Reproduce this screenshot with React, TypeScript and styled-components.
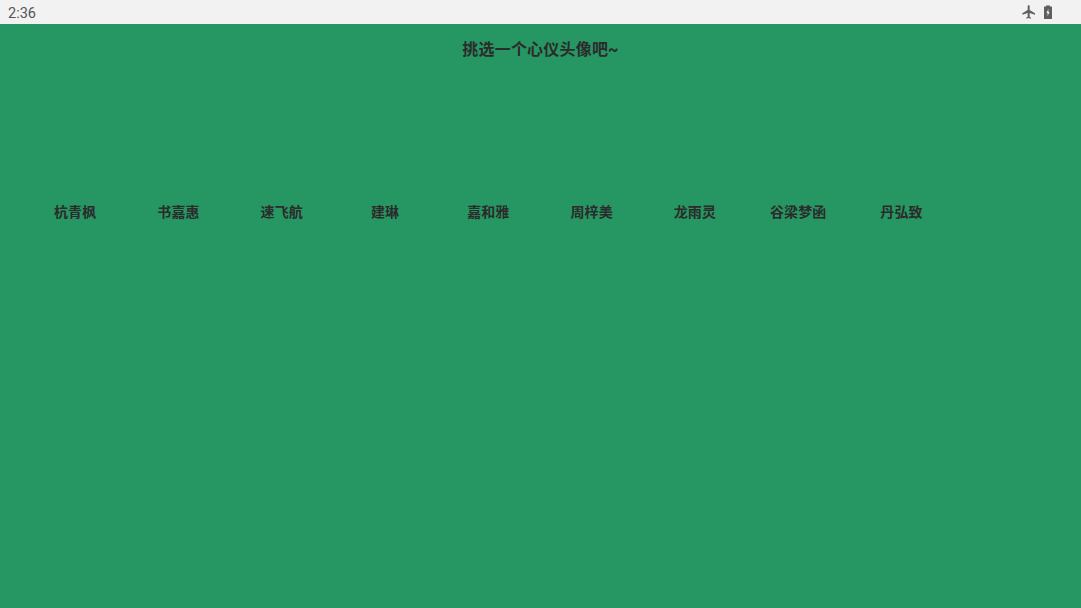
import React from 'react'
import styled, { createGlobalStyle } from 'styled-components'

const NAMES = ['杭青枫', '书嘉惠', '速飞航', '建琳', '嘉和雅', '周梓美', '龙雨灵', '谷梁梦函', '丹弘致']

const GlobalStyle = createGlobalStyle`
  html, body {
    margin: 0;
    padding: 0;
    height: 100%;
    overflow: hidden;
  }
  #root {
    height: 100%;
  }
`

const Page = styled.div`
  width: 1081px;
  height: 608px;
  display: flex;
  flex-direction: column;
  background: #269763;
  font-family: Roboto, "Noto Sans CJK SC", sans-serif;
`

const StatusBar = styled.div`
  height: 24px;
  flex: none;
  display: flex;
  align-items: center;
  justify-content: space-between;
  padding: 0 25px 0 8px;
  background: #f2f2f2;
`

const Clock = styled.span`
  font-size: 14.5px;
  color: #555555;
  position: relative;
  top: 1px;
`

const StatusIcons = styled.div`
  display: flex;
  align-items: center;
  gap: 3px;
`

const Title = styled.h1`
  margin: 0;
  padding-top: 15px;
  height: 22px;
  line-height: 22px;
  font-size: 16px;
  font-weight: 700;
  letter-spacing: 0.2px;
  text-align: center;
  color: #2b2b2b;
`

const NameRow = styled.div`
  display: flex;
  padding: 141px 0 0 23.5px;
`

const NameItem = styled.div`
  width: 103.3px;
  height: 20px;
  line-height: 20px;
  font-size: 14px;
  font-weight: 700;
  letter-spacing: 0.1px;
  text-align: center;
  color: #2b2b2b;
`

function AirplaneIcon() {
  return (
    <svg width="16" height="16" viewBox="0 0 24 24" fill="#5f5f5f">
      <path d="M21 16v-2l-8-5V3.5C13 2.67 12.33 2 11.5 2S10 2.67 10 3.5V9l-8 5v2l8-2.5V19l-2 1.5V22l3.5-1 3.5 1v-1.5L13 19v-5.5l8 2.5z" />
    </svg>
  )
}

function BatteryIcon() {
  return (
    <svg width="16" height="16" viewBox="0 0 16 16">
      <path fill="#5f5f5f" d="M6 1.5h4v1h1.5c.3 0 .5.2.5.5v11.5c0 .3-.2.5-.5.5h-7a.5.5 0 0 1-.5-.5V3c0-.3.2-.5.5-.5H6z" />
      <path fill="#f2f2f2" d="M8.4 5 6.4 9h1.2v3l2-4H8.4z" />
    </svg>
  )
}

export default function App() {
  return (
    <Page>
      <GlobalStyle />
      <StatusBar>
        <Clock>2:36</Clock>
        <StatusIcons>
          <AirplaneIcon />
          <BatteryIcon />
        </StatusIcons>
      </StatusBar>
      <Title>挑选一个心仪头像吧~</Title>
      <NameRow>
        {NAMES.map((name) => (
          <NameItem key={name}>{name}</NameItem>
        ))}
      </NameRow>
    </Page>
  )
}
